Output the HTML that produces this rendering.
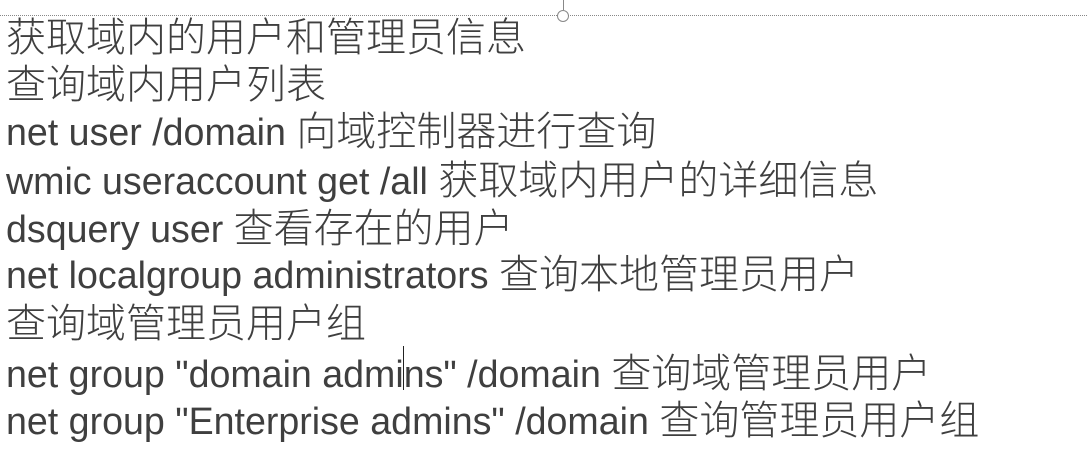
<!DOCTYPE html>
<html><head><meta charset="utf-8"><style>
body{margin:0;width:1087px;height:462px;background:#fff;overflow:hidden;position:relative;font-family:"Liberation Sans","Noto Sans CJK SC",sans-serif;color:#3f3f3f}
.l{position:absolute;left:6px;white-space:nowrap;font-size:37.6px;line-height:48px}
.c{font-family:"Noto Sans CJK SC",sans-serif;font-size:40px;font-weight:300}
</style></head><body>
<div style="position:absolute;left:0;top:15px;width:1087px;border-top:1px dotted #888"></div>
<div style="position:absolute;left:563px;top:0;width:1px;height:10px;background:#888"></div>
<div style="position:absolute;left:557px;top:10px;width:10px;height:10px;border:1px solid #888;border-radius:50%;background:#fff"></div>
<div class="l" style="top:10px"><span class="c">获取域内的用户和管理员信息</span></div>
<div class="l" style="top:57px"><span class="c">查询域内用户列表</span></div>
<div class="l" style="top:104px">net user /domain <span class="c">向域控制器进行查询</span></div>
<div class="l" style="top:153px">wmic useraccount get /all <span class="c">获取域内用户的详细信息</span></div>
<div class="l" style="top:201px">dsquery user <span class="c">查看存在的用户</span></div>
<div class="l" style="top:247px">net localgroup administrators <span class="c">查询本地管理员用户</span></div>
<div class="l" style="top:296px"><span class="c">查询域管理员用户组</span></div>
<div class="l" style="top:346px">net group "domain admins" /domain <span class="c">查询域管理员用户</span></div>
<div class="l" style="top:393px">net group "Enterprise admins" /domain <span class="c">查询管理员用户组</span></div>
<div style="position:absolute;left:403px;top:346px;width:1px;height:44px;background:#222"></div>
</body></html>
